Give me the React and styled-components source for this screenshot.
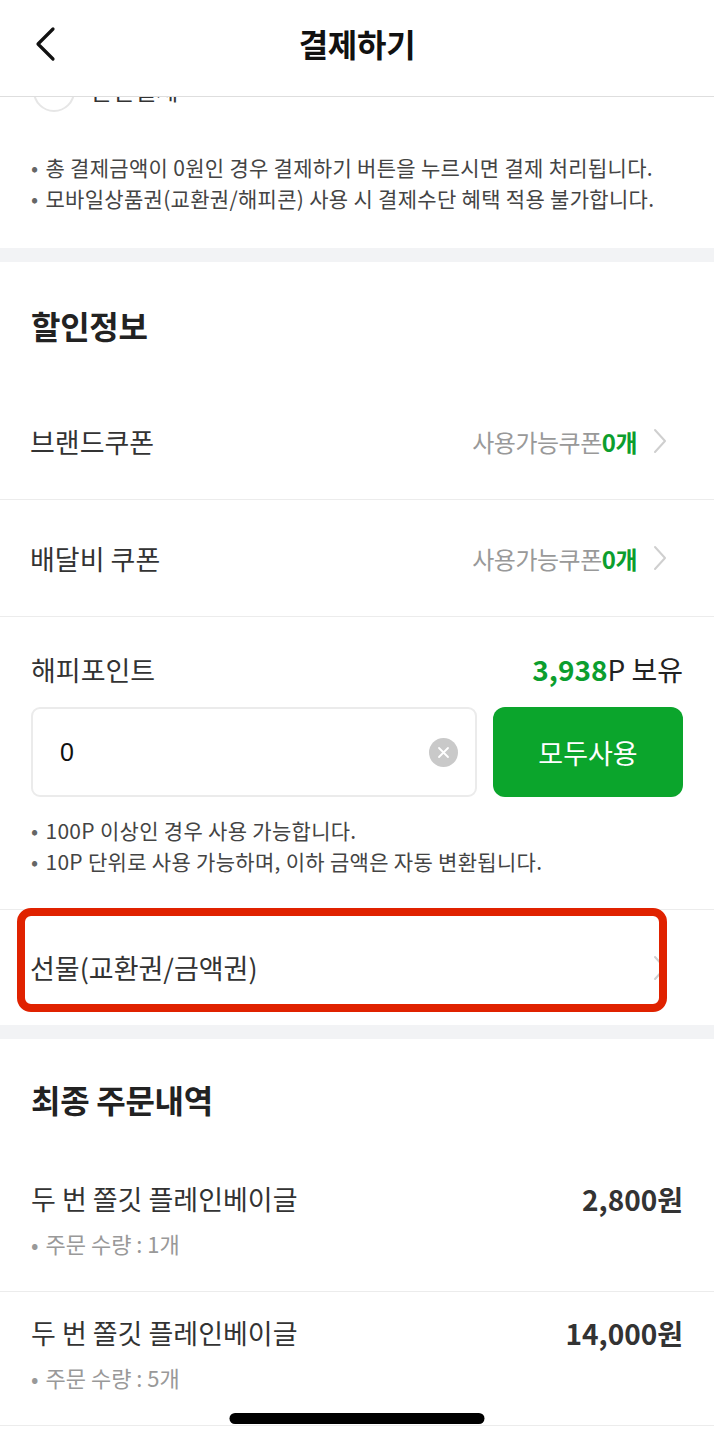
import React from "react"
import styled, { createGlobalStyle } from "styled-components"

const GlobalStyle = createGlobalStyle`
  body {
    margin: 0;
    background: #ffffff;
    font-family: "Noto Sans CJK KR", "Noto Sans", sans-serif;
    color: #222222;
  }
  * {
    box-sizing: border-box;
  }
`

const Page = styled.div`
  width: 714px;
  min-height: 1440px;
  background: #ffffff;
  position: relative;
`

const Header = styled.header`
  position: sticky;
  top: 0;
  z-index: 2;
  height: 97px;
  background: #ffffff;
  border-bottom: 1px solid #dedede;
  display: flex;
  align-items: center;
  justify-content: center;
`

const BackButton = styled.button`
  position: absolute;
  left: 30px;
  top: 26px;
  width: 30px;
  height: 36px;
  padding: 0;
  border: 0;
  background: none;
  display: flex;
  align-items: center;
  justify-content: center;
`

const HeaderTitle = styled.h1`
  margin: 0;
  margin-top: -10px;
  font-size: 32px;
  font-weight: 700;
  color: #111111;
  letter-spacing: -0.3px;
`

const Section = styled.section`
  padding: ${({ pad }) => pad || "0 31px"};
  background: #ffffff;
`

const Band = styled.div`
  height: 14px;
  background: #f2f3f5;
`

const RadioRow = styled.div`
  display: flex;
  align-items: center;
  gap: 15px;
  margin-top: -27px;
  height: 42px;
`

const RadioCircle = styled.span`
  width: 42px;
  height: 42px;
  border-radius: 50%;
  border: 2px solid #e6e6e6;
  margin-left: 2px;
`

const RadioLabel = styled.span`
  font-size: 24px;
  color: #333333;
  margin-top: -4px;
`

const NoteList = styled.ul`
  list-style: none;
  margin: ${({ mt }) => mt || "40px"} 0 0;
  padding: 0;
`

const Note = styled.li`
  font-size: 21px;
  line-height: 31px;
  color: #444444;
  letter-spacing: 0.3px;
  white-space: nowrap;
  &::before {
    content: "•";
    margin-right: 7px;
    color: #666666;
  }
`

const SectionTitle = styled.h2`
  margin: 0;
  height: 36px;
  line-height: 36px;
  font-size: 32px;
  font-weight: 700;
  color: #222222;
  letter-spacing: -0.3px;
`

const LinkRow = styled.div`
  position: relative;
  height: ${({ h }) => h || "117px"};
  display: flex;
  align-items: center;
  justify-content: space-between;
  border-bottom: ${({ last }) => (last ? "none" : "1px solid #ececec")};
  padding: 0 46px 0 30px;
`

const RowLabel = styled.span`
  font-size: 27px;
  color: #333333;
`

const RowRight = styled.div`
  display: flex;
  align-items: center;
  gap: 15px;
`

const CouponText = styled.span`
  font-size: 24px;
  color: #999999;
  letter-spacing: -0.5px;
`

const Green = styled.span`
  color: #0c9e2e;
  font-weight: 700;
`

const Chevron = () => (
  <svg width="16" height="28" viewBox="0 0 16 28" fill="none">
    <path d="M3 3 L13 14 L3 25" stroke="#cfcfcf" strokeWidth="2" strokeLinecap="round" strokeLinejoin="round" />
  </svg>
)

const PointBlock = styled.div`
  padding: 35px 31px 32px;
  border-bottom: 1px solid #ececec;
`

const PointHead = styled.div`
  display: flex;
  justify-content: space-between;
  align-items: center;
  height: 34px;
`

const Balance = styled.span`
  font-size: 28px;
  color: #222222;
`

const InputRow = styled.div`
  display: flex;
  gap: 16px;
  margin-top: 21px;
  height: 90px;
`

const InputBox = styled.div`
  flex: 1;
  display: flex;
  align-items: center;
  justify-content: space-between;
  border: 2px solid #ebebeb;
  border-radius: 9px;
  padding: 0 17px 0 27px;
`

const InputValue = styled.span`
  font-family: "Liberation Sans", "Noto Sans CJK KR", sans-serif;
  font-size: 25px;
  color: #111111;
`

const ClearIcon = styled.span`
  width: 29px;
  height: 29px;
  border-radius: 50%;
  background: #c9c9c9;
  display: flex;
  align-items: center;
  justify-content: center;
`

const UseAllButton = styled.button`
  width: 190px;
  border: 0;
  border-radius: 12px;
  background: #0ba52c;
  color: #ffffff;
  font-family: "Noto Sans CJK KR", sans-serif;
  font-size: 27px;
`

const Highlight = styled.div`
  position: absolute;
  top: -2px;
  left: 17px;
  right: 47px;
  bottom: 13px;
  border: 8px solid #e02200;
  border-radius: 14px;
  pointer-events: none;
`

const OrderItem = styled.div`
  display: flex;
  justify-content: space-between;
  align-items: flex-start;
  padding: 24px 31px 33px;
  border-bottom: 1px solid #ececec;
`

const ItemInfo = styled.div`
  display: flex;
  flex-direction: column;
`

const ItemName = styled.span`
  font-size: 27px;
  line-height: 34px;
  color: #333333;
`

const ItemQty = styled.span`
  margin-top: 12px;
  font-size: 22px;
  line-height: 30px;
  color: #999999;
  &::before {
    content: "•";
    margin-right: 7px;
  }
`

const ItemPrice = styled.span`
  font-size: 28px;
  line-height: 34px;
  font-weight: 700;
  color: #333333;
`

const HomeIndicator = styled.div`
  position: fixed;
  left: 50%;
  bottom: 16px;
  transform: translateX(-50%);
  width: 255px;
  height: 11px;
  border-radius: 6px;
  background: #000000;
  z-index: 3;
`

const coupons = [
  { label: "브랜드쿠폰", count: "0개" },
  { label: "배달비 쿠폰", count: "0개" },
]

const orders = [
  { name: "두 번 쫄깃 플레인베이글", qty: "주문 수량 : 1개", price: "2,800원" },
  { name: "두 번 쫄깃 플레인베이글", qty: "주문 수량 : 5개", price: "14,000원" },
]

export default function App() {
  return (
    <Page>
      <GlobalStyle />
      <Header>
        <BackButton aria-label="뒤로">
          <svg width="24" height="36" viewBox="0 0 24 36" fill="none">
            <path d="M20 3 L5 18 L20 33" stroke="#111" strokeWidth="3.2" strokeLinecap="round" strokeLinejoin="round" />
          </svg>
        </BackButton>
        <HeaderTitle>결제하기</HeaderTitle>
      </Header>

      <Section pad="0 31px 34px">
        <RadioRow>
          <RadioCircle />
          <RadioLabel>간편결제</RadioLabel>
        </RadioRow>
        <NoteList>
          <Note>총 결제금액이 0원인 경우 결제하기 버튼을 누르시면 결제 처리됩니다.</Note>
          <Note>모바일상품권(교환권/해피콘) 사용 시 결제수단 혜택 적용 불가합니다.</Note>
        </NoteList>
      </Section>

      <Band />

      <Section pad="45px 31px 40px">
        <SectionTitle>할인정보</SectionTitle>
      </Section>
      {coupons.map((c) => (
        <LinkRow key={c.label}>
          <RowLabel>{c.label}</RowLabel>
          <RowRight>
            <CouponText>
              사용가능쿠폰<Green>{c.count}</Green>
            </CouponText>
            <Chevron />
          </RowRight>
        </LinkRow>
      ))}
      <PointBlock>
        <PointHead>
          <RowLabel>해피포인트</RowLabel>
          <Balance>
            <Green>3,938</Green>P 보유
          </Balance>
        </PointHead>
        <InputRow>
          <InputBox>
            <InputValue>0</InputValue>
            <ClearIcon>
              <svg width="13" height="13" viewBox="0 0 13 13">
                <path d="M2 2 L11 11 M11 2 L2 11" stroke="#fff" strokeWidth="1.8" strokeLinecap="round" />
              </svg>
            </ClearIcon>
          </InputBox>
          <UseAllButton>모두사용</UseAllButton>
        </InputRow>
        <NoteList mt="18px">
          <Note>100P 이상인 경우 사용 가능합니다.</Note>
          <Note>10P 단위로 사용 가능하며, 이하 금액은 자동 변환됩니다.</Note>
        </NoteList>
      </PointBlock>
      <LinkRow h="115px" last>
        <RowLabel>선물(교환권/금액권)</RowLabel>
        <RowRight>
          <Chevron />
        </RowRight>
        <Highlight />
      </LinkRow>

      <Band />

      <Section pad="42px 31px 41px">
        <SectionTitle>최종 주문내역</SectionTitle>
      </Section>
      {orders.map((o, i) => (
        <OrderItem key={i}>
          <ItemInfo>
            <ItemName>{o.name}</ItemName>
            <ItemQty>{o.qty}</ItemQty>
          </ItemInfo>
          <ItemPrice>{o.price}</ItemPrice>
        </OrderItem>
      ))}
      <HomeIndicator />
    </Page>
  )
}
